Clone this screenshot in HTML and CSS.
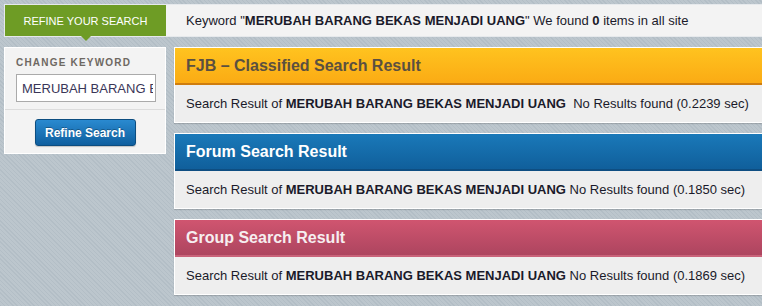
FILE: index.html
```html
<!DOCTYPE html>
<html>
<head>
<meta charset="utf-8">
<link rel="stylesheet" href="styles.css">
</head>
<body>
<div class="page">
  <div class="topbar">
    <div class="tab">REFINE YOUR SEARCH</div>
    <div class="summary">Keyword "<b>MERUBAH BARANG BEKAS MENJADI UANG</b>" We found <b>0</b> items in all site</div>
  </div>
  <div class="main">
    <div class="sidebar">
      <div class="side-top">
        <div class="label">CHANGE KEYWORD</div>
        <input class="kw" type="text" value="MERUBAH BARANG BEKAS MENJADI UANG">
      </div>
      <div class="side-bottom">
        <button class="btn">Refine Search</button>
      </div>
    </div>
    <div class="results">
      <div class="panel fjb">
        <div class="head">FJB – Classified Search Result</div>
        <div class="body">Search Result of <b>MERUBAH BARANG BEKAS MENJADI UANG</b>&nbsp; No Results found (0.2239 sec)</div>
      </div>
      <div class="panel forum">
        <div class="head">Forum Search Result</div>
        <div class="body">Search Result of <b>MERUBAH BARANG BEKAS MENJADI UANG</b> No Results found (0.1850 sec)</div>
      </div>
      <div class="panel group">
        <div class="head">Group Search Result</div>
        <div class="body">Search Result of <b>MERUBAH BARANG BEKAS MENJADI UANG</b> No Results found (0.1869 sec)</div>
      </div>
    </div>
  </div>
</div>
</body>
</html>
```
FILE: styles.css
```css
html, body {
  margin: 0;
  padding: 0;
}
body {
  width: 762px;
  height: 306px;
  overflow: hidden;
  font-family: "Liberation Sans", Arial, sans-serif;
  background-color: #b7c2ca;
  background-image: repeating-linear-gradient(45deg, #b3bec6 0, #b3bec6 1px, #bcc6cd 1px, #bcc6cd 3px);
  color: #1a1a2a;
}
.page {
  padding: 4px 0 0 4px;
}
.topbar {
  display: flex;
  align-items: stretch;
  height: 31px;
  margin-right: -10px;
  background: #f3f3f3;
  border: 1px solid #e6e9ec;
  position: relative;
}
.tab {
  width: 161px;
  background: #6e9c25;
  color: #fff;
  font-size: 11px;
  display: flex;
  align-items: center;
  justify-content: center;
  position: relative;
}
.tab::after {
  content: "";
  position: absolute;
  left: 76px;
  bottom: -5px;
  border-left: 5px solid transparent;
  border-right: 5px solid transparent;
  border-top: 5px solid #6e9c25;
}
.summary {
  padding-left: 20px;
  font-size: 13px;
  display: flex;
  align-items: center;
  white-space: pre;
}
.main {
  display: flex;
  gap: 8px;
  margin-top: 10px;
}
.sidebar {
  width: 160px;
  align-self: flex-start;
  background: #f3f3f3;
  border: 1px solid #fff;
}
.side-top {
  padding: 9px 10px 7px 11px;
  border-bottom: 1px solid #dcdcdc;
}
.label {
  font-size: 10px;
  font-weight: bold;
  letter-spacing: 1.2px;
  color: #6e6862;
  margin-bottom: 6px;
}
.kw {
  box-sizing: border-box;
  width: 140px;
  height: 28px;
  border: 1px solid #aaa;
  background: #fff;
  font-family: "Liberation Sans", Arial, sans-serif;
  font-size: 13px;
  color: #3a3658;
  padding: 0 2px 0 5px;
  margin: 0;
  outline: none;
}
.side-bottom {
  padding: 9px 0 7px 0;
  display: flex;
  justify-content: center;
}
.btn {
  width: 101px;
  height: 27px;
  border: 1px solid #0c4d80;
  border-radius: 3px;
  background: linear-gradient(#2a8ad0, #0f5f9f);
  color: #fff;
  font-family: "Liberation Sans", Arial, sans-serif;
  font-weight: bold;
  font-size: 12px;
  padding: 0;
  text-shadow: 0 -1px 0 rgba(0,0,0,0.3);
  box-shadow: 0 1px 1px rgba(0,0,0,0.2);
}
.results {
  flex: 1;
  margin-right: -12px;
  display: flex;
  flex-direction: column;
  gap: 10px;
}
.panel {
  border: 1px solid #fff;
  background: #eeeeee;
  box-shadow: 0 1px 1px rgba(0,0,0,0.15);
}
.head {
  height: 35px;
  padding-left: 11px;
  display: flex;
  align-items: center;
  font-size: 16px;
  font-weight: bold;
}
.body {
  height: 37px;
  padding-left: 11px;
  display: flex;
  align-items: center;
  font-size: 13px;
  white-space: pre;
}
.fjb .head {
  background: linear-gradient(#ffc31f, #fbab14);
  border-bottom: 2px solid #cf7d0e;
  color: #5b5040;
}
.forum .head {
  background: linear-gradient(#1a79b9, #105f9b);
  border-bottom: 2px solid #0e4e82;
  color: #fff;
}
.group .head {
  background: linear-gradient(#d05570, #ad455f);
  border-bottom: 2px solid #c9637a;
  color: #f6eef0;
}
```
